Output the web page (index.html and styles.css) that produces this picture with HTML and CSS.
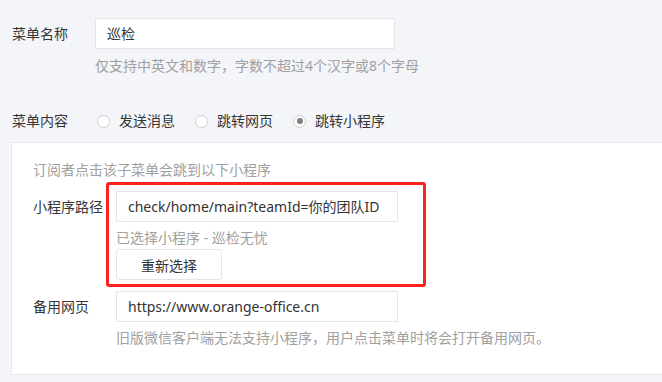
FILE: index.html
```html
<!DOCTYPE html>
<html lang="zh-CN">
<head>
  <meta charset="UTF-8" />
  <title>菜单设置</title>
  <link rel="stylesheet" href="styles.css">
</head>
<body>
  <div class="page">

    <!-- 菜单名称 -->
    <div class="row">
      <label class="label">菜单名称</label>
      <div class="field">
        <div class="input name-input">巡检</div>
        <p class="hint">仅支持中英文和数字，字数不超过4个汉字或8个字母</p>
      </div>
    </div>

    <!-- 菜单内容 -->
    <div class="row radio-row">
      <label class="label">菜单内容</label>
      <div class="radios">
        <span class="radio-item"><span class="radio"></span>发送消息</span>
        <span class="radio-item"><span class="radio"></span>跳转网页</span>
        <span class="radio-item"><span class="radio checked"></span>跳转小程序</span>
      </div>
    </div>

    <div class="panel">
      <p class="hint panel-tip">订阅者点击该子菜单会跳到以下小程序</p>

      <div class="row">
        <label class="label">小程序路径</label>
        <div class="field">
          <div class="input">check/home/main?teamId=你的团队ID</div>
          <p class="hint selected">已选择小程序 - 巡检无忧</p>
          <button class="btn">重新选择</button>
        </div>
      </div>

      <div class="row backup-row">
        <label class="label">备用网页</label>
        <div class="field">
          <div class="input">https://www.orange-office.cn</div>
          <p class="hint">旧版微信客户端无法支持小程序，用户点击菜单时将会打开备用网页。</p>
        </div>
      </div>
    </div>

    <!-- annotation -->
    <div class="mark"></div>
  </div>
</body>
</html>
```

FILE: styles.css
```css
* {
  margin: 0;
  padding: 0;
  box-sizing: border-box;
}

body {
  background: #f4f5f9;
  font-family: 'Noto Sans', 'Noto Sans CJK SC', sans-serif;
  font-size: 14px;
  color: #353535;
  overflow: hidden;
}

.page {
  position: relative;
  padding-top: 18px;
}

.row {
  display: flex;
  align-items: flex-start;
  padding-left: 12px;
}

.label {
  width: 83px;
  flex-shrink: 0;
  line-height: 31px;
}

.field {
  display: flex;
  flex-direction: column;
  align-items: flex-start;
}

.input {
  width: 300px;
  height: 31px;
  line-height: 29px;
  padding: 0 11px;
  background: #ffffff;
  border: 1px solid #e3e5ea;
  color: #333333;
  white-space: nowrap;
}

.hint {
  color: #a0a0a0;
  line-height: 20px;
  margin-top: 7px;
  white-space: nowrap;
}

.radio-row {
  margin-top: 35px;
  line-height: 20px;
}

.radio-row .label {
  line-height: 20px;
}

.radios {
  display: flex;
  gap: 20px;
  margin-left: 2px;
}

.radio-item {
  display: flex;
  align-items: center;
}

.radio {
  width: 13px;
  height: 13px;
  border: 1px solid #cfcfcf;
  border-radius: 50%;
  background: #ffffff;
  margin-right: 9px;
  display: flex;
  align-items: center;
  justify-content: center;
}

.radio.checked::after {
  content: "";
  width: 6px;
  height: 6px;
  border-radius: 50%;
  background: #7f7f7f;
}

.panel {
  margin: 11px -30px 0 11px;
  background: #ffffff;
  border: 1px solid #e6e7eb;
  padding: 17px 0 26px 21px;
}

.panel .row {
  padding-left: 0;
}

.panel-tip {
  margin: 0 0 11px;
}

.panel .input {
  width: 282px;
}

.selected {
  margin-top: 6px;
}

.btn {
  width: 106px;
  height: 31px;
  margin-top: 1px;
  background: #ffffff;
  border: 1px solid #e3e5ea;
  border-radius: 3px;
  font-family: inherit;
  font-size: 14px;
  color: #333333;
}

.backup-row {
  margin-top: 11px;
}

.backup-row .hint {
  margin-top: 6px;
}

.mark {
  position: absolute;
  left: 106px;
  top: 182px;
  width: 320px;
  height: 105px;
  border: 3px solid #ff2020;
  border-radius: 3px;
}
```
